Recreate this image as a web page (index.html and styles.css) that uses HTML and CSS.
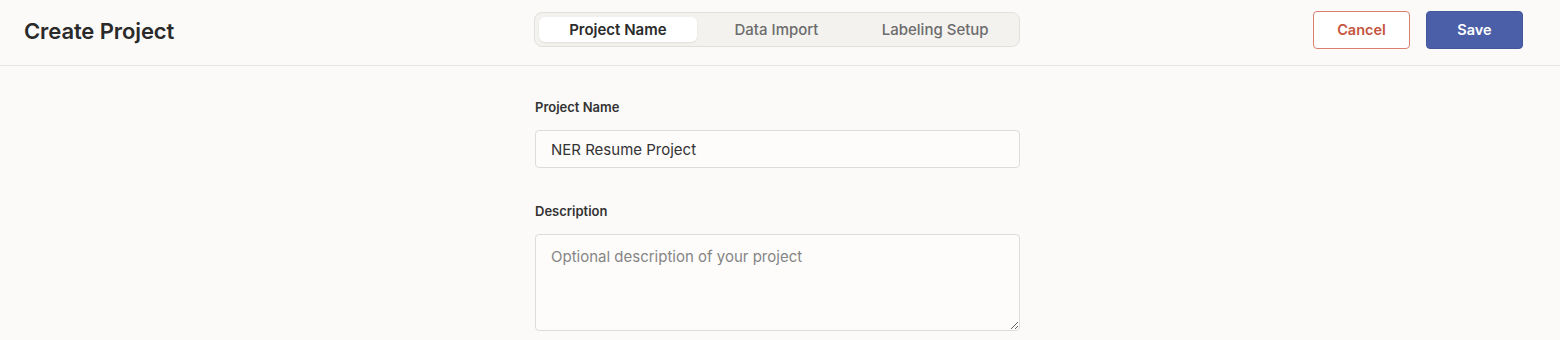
FILE: index.html
```html
<!DOCTYPE html>
<html lang="en">
<head>
  <meta charset="UTF-8">
  <title>Create Project</title>
  <link rel="stylesheet" href="styles.css">
</head>
<body>
  <header class="topbar">
    <h1 class="title">Create Project</h1>
    <nav class="steps">
      <button class="step active">Project Name</button>
      <button class="step">Data Import</button>
      <button class="step">Labeling Setup</button>
    </nav>
    <div class="actions">
      <button class="btn cancel">Cancel</button>
      <button class="btn save">Save</button>
    </div>
  </header>

  <main class="page">
    <div class="form">
      <div class="field">
        <label for="name">Project Name</label>
        <input id="name" type="text" value="NER Resume Project">
      </div>
      <div class="field">
        <label for="desc">Description</label>
        <textarea id="desc" placeholder="Optional description of your project"></textarea>
      </div>
    </div>
  </main>
</body>
</html>
```

FILE: styles.css
```css
* {
  box-sizing: border-box;
}

html, body {
  margin: 0;
  padding: 0;
  background: #fbfaf8;
  font-family: Inter, 'Noto Sans', sans-serif;
  color: #2b2b2b;
}

.topbar {
  display: grid;
  grid-template-columns: 1fr auto 1fr;
  align-items: center;
  height: 66px;
  padding: 0 31px 0 24px;
  border-bottom: 1px solid #e6e4e0;
}

.title {
  margin: -3px 0 0;
  font-size: 22px;
  font-weight: 560;
  letter-spacing: -0.1px;
  color: #2a2a2a;
}

.steps {
  display: flex;
  width: 486px;
  height: 35px;
  padding: 4px;
  margin-top: -6px;
  background: #f3f2ef;
  border: 1px solid #e2e0dc;
  border-radius: 8px;
}

.step {
  flex: 1;
  border: none;
  background: none;
  font-family: inherit;
  font-size: 15px;
  font-weight: 500;
  color: #6c6c6c;
  border-radius: 6px;
  cursor: pointer;
}

.step.active {
  background: #fff;
  color: #2b2b2b;
  font-weight: 600;
  box-shadow: 0 1px 2px rgba(0, 0, 0, 0.08);
}

.actions {
  display: flex;
  justify-content: flex-end;
  gap: 16px;
  margin: -6px 6px 0 0;
}

.btn {
  width: 97px;
  height: 38px;
  border-radius: 4px;
  font-family: inherit;
  font-size: 14.5px;
  font-weight: 600;
  cursor: pointer;
}

.cancel {
  background: #fff;
  border: 1px solid #d9806f;
  color: #c6553f;
}

.save {
  background: #4b5fa8;
  border: 1px solid #44579c;
  color: #fff;
}

.page {
  padding: 33px 5px 0 0;
}

.form {
  width: 485px;
  margin: 0 auto;
}

.field {
  display: flex;
  flex-direction: column;
  margin-bottom: 35px;
}

.field label {
  font-size: 13px;
  font-weight: 600;
  line-height: 16px;
  margin-bottom: 15px;
  color: #333;
}

.field input,
.field textarea {
  font-family: inherit;
  font-size: 15px;
  color: #333;
  background: #fdfcfb;
  border: 1px solid #dedcd8;
  border-radius: 4px;
  padding: 0 15px;
}

.field input {
  height: 38px;
}

.field textarea {
  height: 97px;
  padding: 12px 15px;
  resize: vertical;
}

.field textarea::placeholder {
  color: #858585;
}
```
